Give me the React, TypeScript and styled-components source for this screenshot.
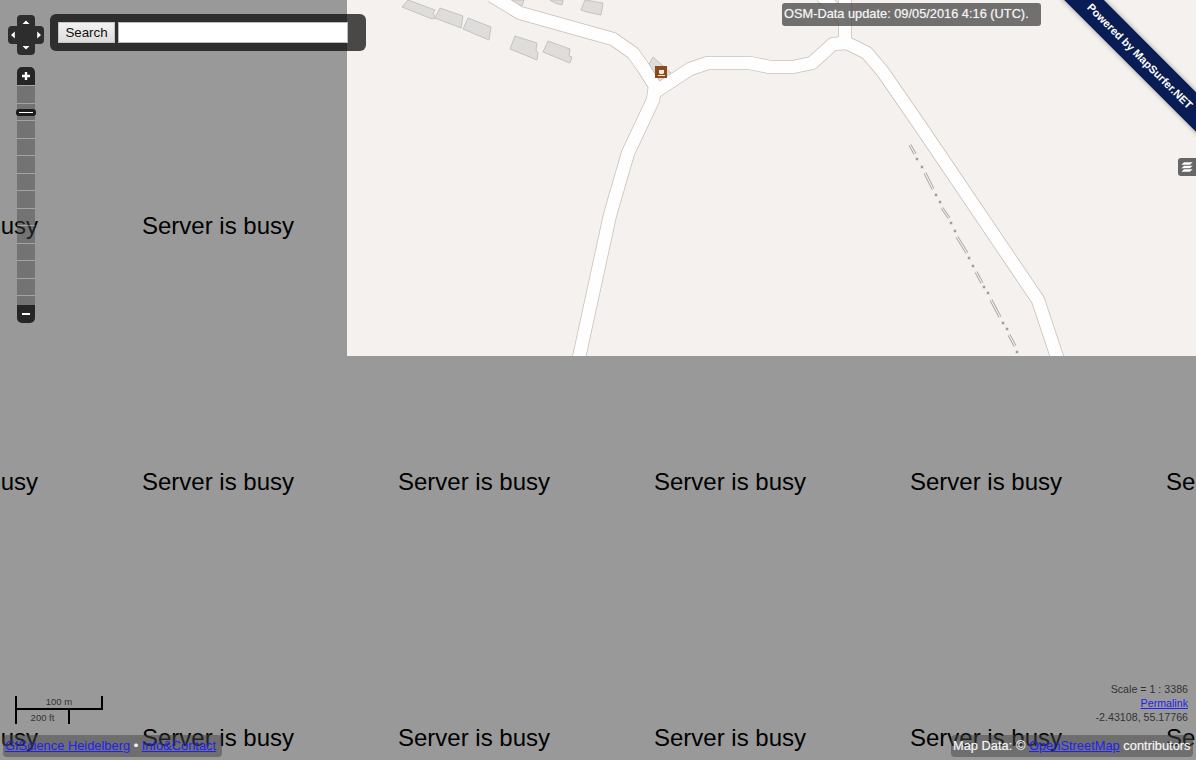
import React from 'react';

import styled, { createGlobalStyle } from 'styled-components';

const TILE = 256;
const BUSY_TILES = Array.from({ length: 24 }, (_, i) => i);
const ZOOM_STEPS = Array.from({ length: 13 }, (_, i) => i);

const ROADS = [
  'M492 -4 L520 13 L613 39 L633 53 L643 67 L655 86 L653 100 L628 153 L610 215 L578.5 360',
  'M655 92 L690 69 L708 63 L750 63 L770 67 L793 67 L812 63 L833 44 L847 43 L867 53 L883 72 L923 130 L1038 300 L1058 360',
  'M845 -4 L845 44',
  'M822 -4 L845 20',
];

const BUILDINGS = [
  '408,0 435,10 433,13 436,18 432,19 402,7',
  '440,8 463,16 461,28 435,18',
  '468,18 491,27 489,40 463,29',
  '515,36 537,43 536,50 538,53 537,60 510,49',
  '548,41 570,49 569,56 572,57 570,63 543,52',
  '585,0 603,3 601,15 587,12 581,10',
  '507,0 524,0 522,6 515,4',
  '550,0 563,0 562,5 555,3',
  '653,57 672,74 662,86 647,68',
];

const RAIL_DASHES = [
  [910, 145, 915, 154],
  [925, 173, 933, 189],
  [942, 208, 949, 218],
  [957, 237, 967, 253],
  [976, 272, 982, 283],
  [991, 300, 1000, 317],
  [1009, 335, 1015, 346],
];

const RAIL_DOTS = [
  [917, 159],
  [922, 167],
  [936, 195],
  [940, 202],
  [951, 223],
  [955, 231],
  [969, 258],
  [973, 266],
  [984, 287],
  [988, 293],
  [1003, 323],
  [1007, 329],
  [1017, 352],
];

const GlobalStyle = createGlobalStyle`
  html,
  body {
    margin: 0;
    height: 100%;
  }

  body {
    overflow: hidden;
    font-family: 'Liberation Sans', Arial, sans-serif;
  }
`;

const MapCanvas = styled.div`
  position: relative;
  width: 1196px;
  height: 760px;
  overflow: hidden;
  background: #999;
`;

const TileGrid = styled.div`
  position: absolute;
  left: -166px;
  top: -158px;
  display: grid;
  grid-template-columns: repeat(6, ${TILE}px);
  grid-auto-rows: ${TILE}px;
`;

const BusyTile = styled.div`
  display: flex;
  align-items: center;
  justify-content: center;
  font-size: 24px;
  color: #000;
`;

const StreetTiles = styled.svg`
  position: absolute;
  left: 347px;
  top: 0;
  width: 849px;
  height: 356px;
  background: #f5f1ee;
`;

const TopLeftControls = styled.div`
  position: absolute;
  left: 8px;
  top: 14px;
  display: flex;
  flex-direction: column;
  gap: 12px;
`;

const PanAndSearch = styled.div`
  display: flex;
  align-items: flex-start;
  gap: 6px;
`;

const PanControl = styled.svg`
  display: block;
  margin-top: 1px;
`;

const SearchPanel = styled.div`
  width: 300px;
  height: 37px;
  padding: 0 8px;
  display: flex;
  align-items: center;
  gap: 3px;
  background: rgba(0, 0, 0, 0.7);
  border-radius: 6px;
`;

const SearchButton = styled.button`
  width: 57px;
  height: 21px;
  padding: 0;
  font-family: 'Liberation Sans', Arial, sans-serif;
  font-size: 13.33px;
  color: #111;
  background: linear-gradient(#f2f2f2, #dcdcdc);
  border: 1px solid #c4c4c4;
`;

const SearchInput = styled.input`
  width: 230px;
  height: 21px;
  box-sizing: border-box;
  padding: 0 2px;
  background: #fff;
  border: 1px solid #bbb;
`;

const ZoomBar = styled.div`
  position: relative;
  width: 18px;
  margin-left: 9px;
  display: flex;
  flex-direction: column;
`;

const ZoomButton = styled.div<{ $top?: boolean }>`
  height: 18px;
  display: flex;
  align-items: center;
  justify-content: center;
  background: rgba(0, 0, 0, 0.75);
  border-radius: ${(p) => (p.$top ? '5px 5px 0 0' : '0 0 5px 5px')};
`;

const ZoomTrack = styled.div`
  height: 220px;
  overflow: hidden;
`;

const ZoomStep = styled.div`
  height: 17.5px;
  box-sizing: border-box;
  background: rgba(68, 68, 68, 0.45);
  border-top: 1px solid rgba(255, 255, 255, 0.35);
`;

const ZoomThumb = styled.div`
  position: absolute;
  left: -1px;
  top: 42px;
  width: 20px;
  height: 7px;
  display: flex;
  align-items: center;
  justify-content: center;
  background: #1c1c1c;
  border-radius: 3px;
`;

const ThumbLine = styled.span`
  display: block;
  width: 14px;
  height: 1px;
  background: #fff;
`;

const UpdateLabel = styled.div`
  position: absolute;
  left: 782px;
  top: 3px;
  width: 259px;
  height: 23px;
  padding-left: 2px;
  box-sizing: border-box;
  line-height: 22px;
  font-size: 12.8px;
  color: #f2f2f2;
  text-shadow: 0 0 1px rgba(255, 255, 255, 0.6);
  background: rgba(68, 68, 68, 0.75);
  border-radius: 3px;
  white-space: nowrap;
`;

const Ribbon = styled.div`
  position: absolute;
  left: 1040px;
  top: 42px;
  width: 200px;
  height: 28px;
  line-height: 28px;
  text-align: center;
  transform: rotate(45deg);
  font-size: 11px;
  font-weight: bold;
  color: #fff;
  background: #091d54;
  box-shadow: 0 0 5px rgba(0, 0, 0, 0.4);
  white-space: nowrap;
`;

const LayerToggle = styled.div`
  position: absolute;
  right: 0;
  top: 158px;
  width: 18px;
  height: 18px;
  display: flex;
  align-items: center;
  justify-content: center;
  background: #666;
  border-radius: 3px 0 0 3px;
`;

const BottomLeftControls = styled.div`
  position: absolute;
  left: 3px;
  bottom: 3px;
  display: flex;
  flex-direction: column;
  align-items: flex-start;
`;

const BottomRightControls = styled.div`
  position: absolute;
  right: 3px;
  bottom: 3px;
  display: flex;
  flex-direction: column;
  align-items: flex-end;
`;

const ScaleBox = styled.div`
  margin: 0 0 11px 12px;
  display: flex;
  flex-direction: column;
  align-items: flex-start;
`;

const ScaleRow = styled.div<{ $upper?: boolean; $width: number }>`
  box-sizing: border-box;
  width: ${(p) => p.$width}px;
  height: 14px;
  display: flex;
  align-items: ${(p) => (p.$upper ? 'flex-start' : 'center')};
  justify-content: center;
  font-size: 9.5px;
  line-height: 11px;
  color: #333;
  border: solid #000;
  border-width: ${(p) => (p.$upper ? '0 2px 2px 2px' : '0 2px')};
`;

const Readout = styled.div`
  margin: 0 5px 11px 0;
  display: flex;
  flex-direction: column;
  align-items: flex-end;
  font-size: 10.67px;
  line-height: 14px;
  color: #333;
`;

const FooterBox = styled.div<{ $width: number }>`
  width: ${(p) => p.$width}px;
  height: 22px;
  padding: 0 2px;
  box-sizing: border-box;
  line-height: 22px;
  font-size: 12.87px;
  color: #f2f2f2;
  text-shadow: 0 0 1px rgba(255, 255, 255, 0.5);
  background: rgba(68, 68, 68, 0.5);
  border-radius: 4px;
  white-space: nowrap;
`;

const BlueLink = styled.a`
  color: #22e;
  text-decoration: underline;
  text-shadow: none;
`;

const StreetMap: React.FC = () => (
  <StreetTiles viewBox='347 0 849 356'>
    {BUILDINGS.map((points) => (
      <polygon key={points} points={points} fill='#dfdddb' stroke='#c6c3bf' strokeWidth={1} />
    ))}
    {ROADS.map((d) => (
      <path key={d} d={d} fill='none' stroke='#c9bfb3' strokeWidth={14} strokeLinejoin='round' />
    ))}
    {ROADS.map((d) => (
      <path key={d} d={d} fill='none' stroke='#fefefe' strokeWidth={12.5} strokeLinejoin='round' />
    ))}
    {RAIL_DASHES.map(([x1, y1, x2, y2]) => (
      <g key={x1}>
        <line x1={x1} y1={y1} x2={x2} y2={y2} stroke='#a8a5a2' strokeWidth={3} />
        <line x1={x1} y1={y1} x2={x2} y2={y2} stroke='#f5f1ee' strokeWidth={1.2} />
      </g>
    ))}
    {RAIL_DOTS.map(([x, y]) => (
      <rect key={x} x={x - 1.25} y={y - 1.25} width={2.5} height={2.5} fill='#a09e9b' />
    ))}
    <rect x={655} y={66} width={12} height={12} fill='#8a4b1c' />
    <path d='M659 70 H664 V73.5 H663 V74 H660 V73.5 H659 Z M658 75 H665 V76 H658 Z' fill='#f3e9dc' />
  </StreetTiles>
);

const App: React.FC = () => (
  <MapCanvas>
    <GlobalStyle />
    <TileGrid>
      {BUSY_TILES.map((i) => (
        <BusyTile key={i}>Server is busy</BusyTile>
      ))}
    </TileGrid>
    <StreetMap />

    <TopLeftControls>
      <PanAndSearch>
        <PanControl width={36} height={40} viewBox='0 0 36 40'>
          <path
            d='M13 0 H23 Q27 0 27 4 V11 H32 Q36 11 36 15 V25 Q36 29 32 29 H27 V36 Q27 40 23 40 H13 Q9 40 9 36 V29 H4 Q0 29 0 25 V15 Q0 11 4 11 H9 V4 Q9 0 13 0 Z'
            fill='#2d2d2d'
          />
          <path
            d='M18 5.5 L21.5 9 H14.5 Z M18 34.5 L21.5 31 H14.5 Z M3 20 L6.8 16.5 V23.5 Z M33 20 L29.2 16.5 V23.5 Z'
            fill='#fff'
          />
        </PanControl>
        <SearchPanel>
          <SearchButton>Search</SearchButton>
          <SearchInput />
        </SearchPanel>
      </PanAndSearch>

      <ZoomBar>
        <ZoomButton $top>
          <svg width={10} height={10} viewBox='0 0 10 10'>
            <path d='M3.8 1 H6.2 V3.8 H9 V6.2 H6.2 V9 H3.8 V6.2 H1 V3.8 H3.8 Z' fill='#fff' />
          </svg>
        </ZoomButton>
        <ZoomTrack>
          {ZOOM_STEPS.map((i) => (
            <ZoomStep key={i} />
          ))}
        </ZoomTrack>
        <ZoomButton>
          <svg width={10} height={10} viewBox='0 0 10 10'>
            <rect x={1} y={4} width={8} height={2} fill='#fff' />
          </svg>
        </ZoomButton>
        <ZoomThumb>
          <ThumbLine />
        </ZoomThumb>
      </ZoomBar>
    </TopLeftControls>

    <UpdateLabel>OSM-Data update: 09/05/2016 4:16 (UTC).</UpdateLabel>
    <Ribbon>Powered by MapSurfer.NET</Ribbon>

    <LayerToggle>
      <svg width={14} height={14} viewBox='0 0 14 14'>
        <path
          d='M4 2 H13 L10 5 H1 Z M4 5.5 H13 L10 8.5 H1 Z M4 9 H13 L10 12 H1 Z'
          fill='#fff'
          stroke='#666'
          strokeWidth={0.5}
        />
      </svg>
    </LayerToggle>

    <BottomLeftControls>
      <ScaleBox>
        <ScaleRow $upper $width={88}>
          100 m
        </ScaleRow>
        <ScaleRow $width={55}>200 ft</ScaleRow>
      </ScaleBox>
      <FooterBox $width={219}>
        <BlueLink href='#'>GIScience Heidelberg</BlueLink> • <BlueLink href='#'>Info&amp;Contact</BlueLink>
      </FooterBox>
    </BottomLeftControls>

    <BottomRightControls>
      <Readout>
        <span>Scale = 1 : 3386</span>
        <BlueLink href='#'>Permalink</BlueLink>
        <span>-2.43108, 55.17766</span>
      </Readout>
      <FooterBox $width={242}>
        Map Data: © <BlueLink href='#'>OpenStreetMap</BlueLink> contributors
      </FooterBox>
    </BottomRightControls>
  </MapCanvas>
);

export default App;
